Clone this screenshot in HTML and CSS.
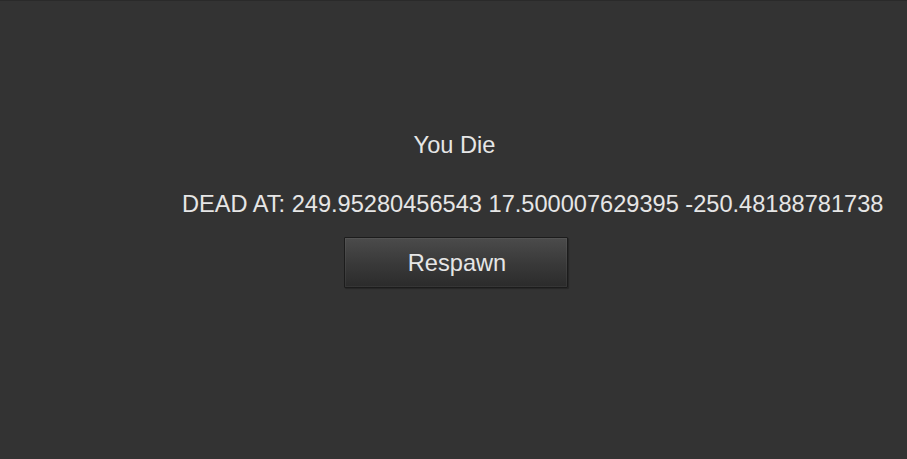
FILE: index.html
```html
<!DOCTYPE html>
<html>
<head>
<meta charset="utf-8">
<link rel="stylesheet" href="styles.css">
</head>
<body>
<div class="screen">
  <div class="title">You Die</div>
  <div class="coords">DEAD AT: 249.95280456543 17.500007629395 -250.48188781738</div>
  <button class="btn">Respawn</button>
</div>
</body>
</html>
```
FILE: styles.css
```css
html, body {
  margin: 0;
  height: 100%;
  background: #333333;
}
body {
  border-top: 1px solid #2a2a2a;
  box-sizing: border-box;
  font-family: "Liberation Sans", Arial, sans-serif;
  color: #e6e6e6;
  font-size: 23.6px;
}
.screen {
  display: flex;
  flex-direction: column;
  align-items: center;
  padding-top: 131px;
}
.title {
  line-height: 27px;
  margin-left: 2px;
}
.coords {
  line-height: 27px;
  margin-top: 32px;
  align-self: flex-start;
  margin-left: 182px;
  white-space: nowrap;
}
.btn {
  margin-top: 19px;
  width: 224px;
  height: 51px;
  box-sizing: border-box;
  border: 1px solid #1c1c1c;
  border-radius: 1px;
  background: linear-gradient(to bottom, #4b4b4b 0%, #3a3a3a 50%, #2b2b2b 100%);
  box-shadow: inset 0 0 0 1px rgba(255, 255, 255, 0.05), 1px 1px 1px rgba(0, 0, 0, 0.25);
  color: #e6e6e6;
  font-family: "Liberation Sans", Arial, sans-serif;
  font-size: 23.6px;
  line-height: 47px;
  padding: 2px 0 0 2px;
  margin-left: 5px;
}
```
